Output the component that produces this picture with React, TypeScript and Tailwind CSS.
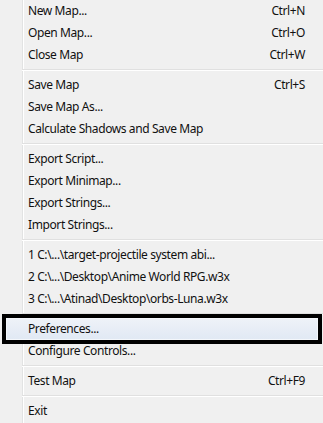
import type { ReactNode } from "react"

type Entry = { label: string; shortcut?: string; selected?: boolean } | "sep"

const entries: Entry[] = [
  { label: "New Map...", shortcut: "Ctrl+N" },
  { label: "Open Map...", shortcut: "Ctrl+O" },
  { label: "Close Map", shortcut: "Ctrl+W" },
  "sep",
  { label: "Save Map", shortcut: "Ctrl+S" },
  { label: "Save Map As..." },
  { label: "Calculate Shadows and Save Map" },
  "sep",
  { label: "Export Script..." },
  { label: "Export Minimap..." },
  { label: "Export Strings..." },
  { label: "Import Strings..." },
  "sep",
  { label: "1 C:\\...\\target-projectile system abi..." },
  { label: "2 C:\\...\\Desktop\\Anime World RPG.w3x" },
  { label: "3 C:\\...\\Atinad\\Desktop\\orbs-Luna.w3x" },
  "sep",
  { label: "Preferences...", selected: true },
  { label: "Configure Controls..." },
  "sep",
  { label: "Test Map", shortcut: "Ctrl+F9" },
  "sep",
  { label: "Exit" },
]

function Row({ children, shortcut, selected }: { children: ReactNode; shortcut?: string; selected?: boolean }) {
  return (
    <div className="relative h-[22px] flex items-center pl-[28px] pr-[18px]">
      {/* highlight box around the selected item */}
      {selected && (
        <div className="absolute left-[2px] right-[1px] top-[-4px] bottom-[-4px] border-4 border-black">
          <div className="h-full w-full border border-[#f4f7fb] bg-gradient-to-b from-[#eef2f8] to-[#e1e9f4]" />
        </div>
      )}
      <span className="relative flex-1 whitespace-nowrap">{children}</span>
      {shortcut && <span className="relative whitespace-nowrap">{shortcut}</span>}
    </div>
  )
}

export default function App() {
  return (
    <div
      className="relative w-[323px] h-[423px] overflow-hidden bg-[#f0f0f0] text-[12px] tracking-[-0.4px] text-[#111]"
      style={{ fontFamily: "'Noto Sans', 'Open Sans', sans-serif" }}
    >
      {/* gutter line */}
      <div className="absolute top-0 bottom-0 left-[22px] w-px bg-[#e2e3e3]" />
      <div className="absolute top-0 bottom-0 left-[23px] w-px bg-white" />

      <div className="relative flex flex-col">
        {entries.map((e, i) =>
          e === "sep" ? (
            <div key={i} className="h-[8px] flex flex-col justify-center pl-[22px]">
              <div className="h-px bg-[#e0e0e0]" />
              <div className="h-px bg-white" />
            </div>
          ) : (
            <Row key={i} shortcut={e.shortcut} selected={e.selected}>
              {e.label}
            </Row>
          )
        )}
      </div>
    </div>
  )
}
